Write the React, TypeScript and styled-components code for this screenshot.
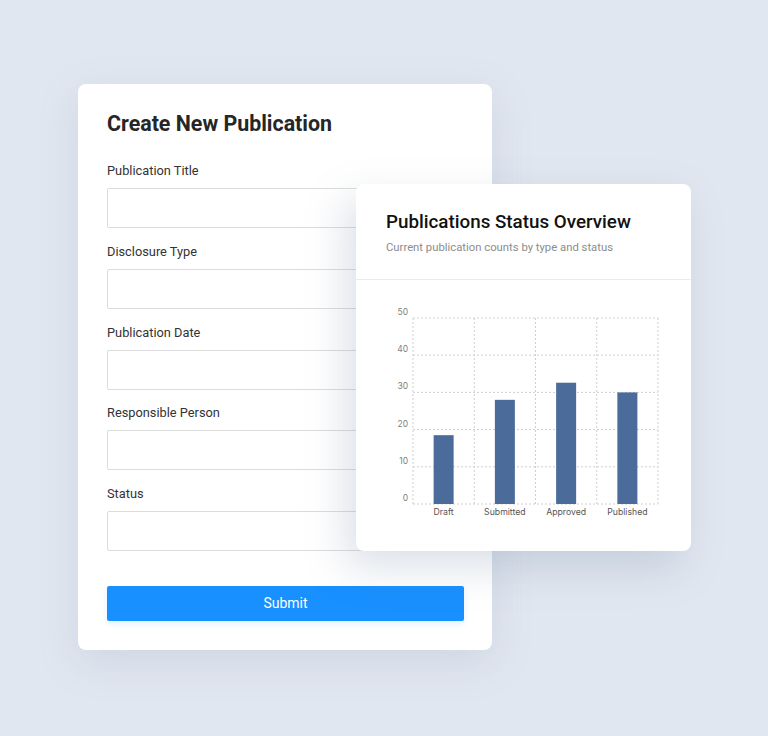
import styled, {createGlobalStyle} from "styled-components";

const GlobalStyle = createGlobalStyle`
  html, body {
    margin: 0;
    padding: 0;
    background: #e1e7f0;
    font-family: Roboto, "Noto Sans", Arial, sans-serif;
  }
  * { box-sizing: border-box; }
`;

const Stage = styled.div`
  position: relative;
  width: 768px;
  height: 736px;
  padding: 84px 0 0 78px;
  background: #e1e7f0;
`;

const FormCard = styled.form`
  width: 414px;
  height: 566px;
  background: #fff;
  border-radius: 8px;
  padding: 27px 28px 29px 29px;
  box-shadow: 0 12px 40px rgba(120, 140, 170, 0.18);
  display: flex;
  flex-direction: column;
`;

const FormTitle = styled.h1`
  margin: 0 0 26px;
  font-size: 21.4px;
  line-height: 25px;
  font-weight: 700;
  color: #262626;
`;

const Field = styled.div`
  display: flex;
  flex-direction: column;
  gap: 9px;
  margin-bottom: 14.75px;
`;

const Label = styled.label`
  font-size: 12.8px;
  line-height: 17px;
  color: #333;
`;

const Input = styled.input`
  height: 40px;
  width: 100%;
  border: 1px solid #dcdcdc;
  border-radius: 2px;
  background: #fff;
  padding: 0 10px;
  font-size: 13px;
  outline: none;
`;

const SubmitButton = styled.button`
  margin-top: 20px;
  height: 35px;
  width: 100%;
  border: none;
  border-radius: 2px;
  background: #1890ff;
  color: #fff;
  font-family: inherit;
  font-size: 14px;
  box-shadow: 0 3px 6px rgba(24, 144, 255, 0.12);
`;

const ChartCard = styled.section`
  position: absolute;
  left: 356px;
  top: 184px;
  width: 335px;
  height: 367px;
  background: #fff;
  border-radius: 8px;
  box-shadow: -10px 16px 40px rgba(110, 130, 160, 0.25);
  overflow: hidden;
`;

const ChartHeader = styled.header`
  padding: 27px 30px 0;
  height: 96px;
  border-bottom: 1px solid #ebebeb;
`;

const ChartTitle = styled.h2`
  margin: 0 0 7px;
  font-size: 18.8px;
  line-height: 23px;
  font-weight: 500;
  color: #111;
`;

const ChartSubtitle = styled.p`
  margin: 0;
  font-size: 11.3px;
  line-height: 14px;
  color: #8c8c8c;
`;

const ChartBody = styled.svg`
  display: block;
  width: 335px;
  height: 270px;
  font-family: Inter, Roboto, Arial, sans-serif;
`;

const fields = [
  "Publication Title",
  "Disclosure Type",
  "Publication Date",
  "Responsible Person",
  "Status",
];

const data = [
  {name: "Draft", value: 18.5},
  {name: "Submitted", value: 28},
  {name: "Approved", value: 32.6},
  {name: "Published", value: 30},
];

// plot area in svg coords
const left = 57;
const right = 302;
const top = 38;
const bottom = 224;
const max = 50;

function BarChart() {
  const w = right - left;
  const h = bottom - top;
  const band = w / data.length;
  const ticks = [0, 10, 20, 30, 40, 50];
  return (
    <ChartBody viewBox="0 0 335 270">
      {ticks.map((t) => {
        const y = bottom - (t / max) * h;
        return (
          <g key={t}>
            <line x1={left} x2={right} y1={y} y2={y} stroke="#cfcfcf" strokeDasharray="2 2" />
            <text x={52} y={y - 3} textAnchor="end" fontSize="8.5" fill="#808080">
              {t}
            </text>
          </g>
        );
      })}
      {[0, 1, 2, 3, 4].map((i) => (
        <line
          key={i}
          x1={left + band * i}
          x2={left + band * i}
          y1={top}
          y2={bottom}
          stroke="#cfcfcf"
          strokeDasharray="2 2"
        />
      ))}
      {data.map((d, i) => {
        const cx = left + band * i + band / 2;
        const bh = (d.value / max) * h;
        return (
          <g key={d.name}>
            <rect x={cx - 10} y={bottom - bh} width={20} height={bh} fill="#4b6b9b" />
            <text x={cx} y={235} textAnchor="middle" fontSize="8.7" fill="#555">
              {d.name}
            </text>
          </g>
        );
      })}
    </ChartBody>
  );
}

export default function App() {
  return (
    <>
      <GlobalStyle />
      <Stage>
        <FormCard onSubmit={(e) => e.preventDefault()}>
          <FormTitle>Create New Publication</FormTitle>
          {fields.map((f) => (
            <Field key={f}>
              <Label>{f}</Label>
              <Input />
            </Field>
          ))}
          <SubmitButton type="submit">Submit</SubmitButton>
        </FormCard>
        <ChartCard>
          <ChartHeader>
            <ChartTitle>Publications Status Overview</ChartTitle>
            <ChartSubtitle>Current publication counts by type and status</ChartSubtitle>
          </ChartHeader>
          <BarChart />
        </ChartCard>
      </Stage>
    </>
  );
}
